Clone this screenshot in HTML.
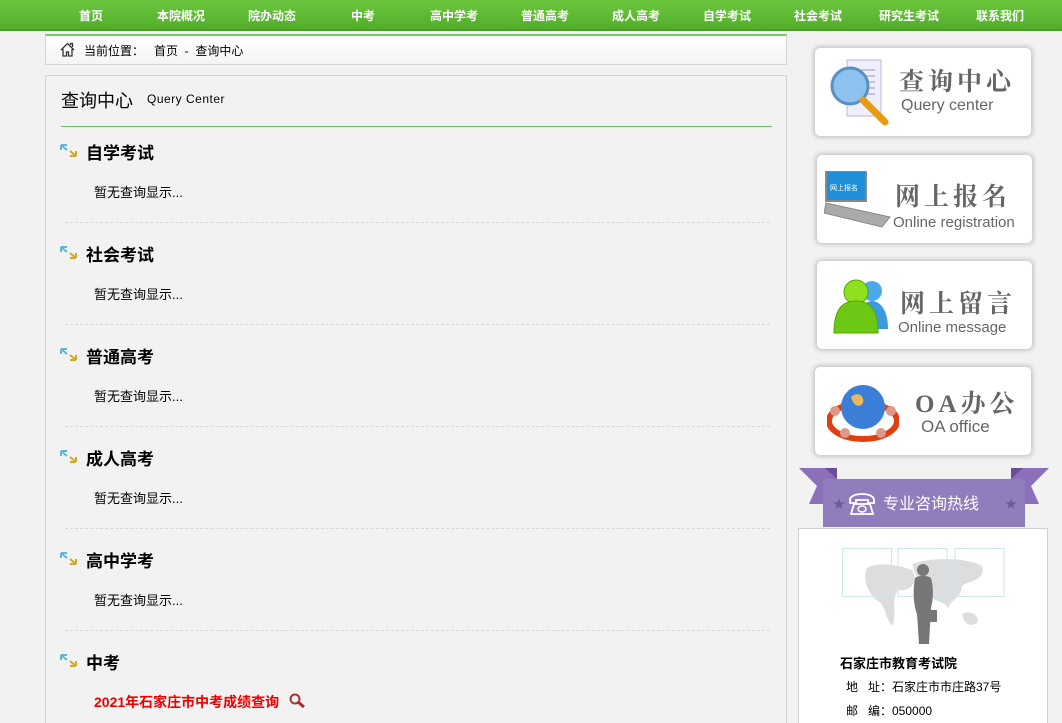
<!DOCTYPE html>
<html><head><meta charset="utf-8"><style>
*{margin:0;padding:0;box-sizing:border-box}
html{overflow:hidden;height:723px}
body{width:1062px;height:723px;overflow:hidden;background:#f2f2f2;font-family:"Liberation Sans","Noto Sans CJK SC",sans-serif;position:relative;color:#000}
.nav{position:absolute;left:0;top:0;width:1062px;height:31px;background:linear-gradient(#6dc63e,#52ae2b);border-bottom:2px solid #4a9e26}
.nav span{position:absolute;top:7px;color:#fff;font-size:12px;font-weight:bold;transform:translateX(-50%)}
.bc{position:absolute;left:45px;top:34px;width:742px;height:31px;border:1px solid #d4d4d4;border-top:2px solid #7cc56a;background:linear-gradient(#fff,#f4f4f4);font-size:12px}
.main{position:absolute;left:45px;top:75px;width:742px;height:648px;border:1px solid #d4d4d4;border-bottom:none;background:#f2f2f2}
.a{position:absolute;white-space:nowrap}
.sec{position:absolute;left:15px;width:711px;height:102px}
.sec h3{position:absolute;left:26px;top:0;font-size:17px;font-weight:bold}
.sec .ic{position:absolute;left:0;top:5px}
.sec p{position:absolute;left:34px;top:43px;font-size:13px}
.sec .d{position:absolute;left:5px;top:83px;width:705px;border-top:1px dashed #d8d8d8}
.card{position:absolute;width:216px;height:88px;background:#fff;border-radius:5px;box-shadow:0 0 4px 2px #c8c8c8}
.card .cn{position:absolute;font-family:"Liberation Serif","Noto Serif CJK SC",serif;font-size:25px;color:#666;letter-spacing:4px;font-weight:bold}
.card .en{position:absolute;font-size:16px;color:#666}
</style></head><body>
<div class="nav">
<span style="left:91px">首页</span><span style="left:181px">本院概况</span><span style="left:272px">院办动态</span><span style="left:363px">中考</span><span style="left:454px">高中学考</span><span style="left:545px">普通高考</span><span style="left:636px">成人高考</span><span style="left:727px">自学考试</span><span style="left:818px">社会考试</span><span style="left:909px">研究生考试</span><span style="left:1000px">联系我们</span>
</div>
<div class="bc">
<svg class="a" style="left:14px;top:6px" width="15" height="15" viewBox="0 0 15 15"><path d="M1 8L7.5 1.5 14 8M3 7v7h3.5v-4h2v4H12V7M10.5 3v-1.5h2v3.5" fill="none" stroke="#333" stroke-width="1.3"/></svg>
<span class="a" style="left:38px;top:6px">当前位置：&nbsp;&nbsp; 首页 &nbsp;- &nbsp;查询中心</span>
</div>
<div class="main">
<span class="a" style="left:15px;top:11px;font-size:18px">查询中心</span>
<span class="a" style="left:101px;top:16px;font-size:12px;letter-spacing:.5px">Query Center</span>
<div class="a" style="left:15px;top:50px;width:711px;border-top:1px solid #6cbf5a"></div>
</div>
<div class="a" style="left:45px;top:75px;width:742px;height:648px">
<div class="sec" style="top:64px"><svg class="ic" width="17" height="13"><path d="M1 1h6M1 1v5M1 1l6 5" stroke="#5ab8d8" stroke-width="2" fill="none"/><path d="M16 12h-6M16 12v-5M16 12l-6-5" stroke="#d6a820" stroke-width="2" fill="none"/></svg><h3>自学考试</h3><p>暂无查询显示...</p><div class="d"></div></div>
<div class="sec" style="top:166px"><svg class="ic" width="17" height="13"><path d="M1 1h6M1 1v5M1 1l6 5" stroke="#5ab8d8" stroke-width="2" fill="none"/><path d="M16 12h-6M16 12v-5M16 12l-6-5" stroke="#d6a820" stroke-width="2" fill="none"/></svg><h3>社会考试</h3><p>暂无查询显示...</p><div class="d"></div></div>
<div class="sec" style="top:268px"><svg class="ic" width="17" height="13"><path d="M1 1h6M1 1v5M1 1l6 5" stroke="#5ab8d8" stroke-width="2" fill="none"/><path d="M16 12h-6M16 12v-5M16 12l-6-5" stroke="#d6a820" stroke-width="2" fill="none"/></svg><h3>普通高考</h3><p>暂无查询显示...</p><div class="d"></div></div>
<div class="sec" style="top:370px"><svg class="ic" width="17" height="13"><path d="M1 1h6M1 1v5M1 1l6 5" stroke="#5ab8d8" stroke-width="2" fill="none"/><path d="M16 12h-6M16 12v-5M16 12l-6-5" stroke="#d6a820" stroke-width="2" fill="none"/></svg><h3>成人高考</h3><p>暂无查询显示...</p><div class="d"></div></div>
<div class="sec" style="top:472px"><svg class="ic" width="17" height="13"><path d="M1 1h6M1 1v5M1 1l6 5" stroke="#5ab8d8" stroke-width="2" fill="none"/><path d="M16 12h-6M16 12v-5M16 12l-6-5" stroke="#d6a820" stroke-width="2" fill="none"/></svg><h3>高中学考</h3><p>暂无查询显示...</p><div class="d"></div></div>
<div class="sec" style="top:574px"><svg class="ic" width="17" height="13"><path d="M1 1h6M1 1v5M1 1l6 5" stroke="#5ab8d8" stroke-width="2" fill="none"/><path d="M16 12h-6M16 12v-5M16 12l-6-5" stroke="#d6a820" stroke-width="2" fill="none"/></svg><h3>中考</h3><p style="color:#e00;font-weight:bold;font-size:14px;top:43px">2021年石家庄市中考成绩查询 <svg width="18" height="15" style="vertical-align:-1px;margin-left:6px"><circle cx="6" cy="6" r="4.5" fill="#eee" stroke="#a33" stroke-width="2"/><path d="M9 9l6 5" stroke="#933" stroke-width="3"/></svg></p></div>
</div>

<div class="card" style="left:815px;top:48px">
<svg class="a" style="left:10px;top:8px" width="75" height="74"><rect x="22" y="4" width="34" height="56" fill="#eef" stroke="#bbc"/><path d="M28 14h22M28 20h22M28 26h22M28 32h22M28 38h22" stroke="#99a"/><circle cx="25" cy="30" r="18" fill="#8ec2ee" stroke="#5a8fc4" stroke-width="3"/><path d="M38 44l22 22" stroke="#e89a10" stroke-width="7" stroke-linecap="round"/></svg>
<span class="cn" style="left:84px;top:14px">查询中心</span><span class="en" style="left:86px;top:49px">Query center</span></div>
<div class="card" style="left:817px;top:155px;width:215px">
<svg class="a" style="left:7px;top:16px" width="70" height="64"><rect x="2" y="0" width="40" height="30" fill="#1e8fd8" stroke="#888" stroke-width="2"/><text x="6" y="19" font-size="7" fill="#fff" font-family="Noto Sans CJK SC">网上报名</text><path d="M2 32l64 14-8 10L0 42z" fill="#aaa" stroke="#888"/></svg>
<span class="cn" style="left:78px;top:22px">网上报名</span><span class="en" style="left:76px;top:59px;font-size:15px">Online registration</span></div>
<div class="card" style="left:817px;top:261px;width:215px">
<svg class="a" style="left:15px;top:16px" width="60" height="62"><circle cx="40" cy="14" r="10" fill="#4aaae8"/><path d="M26 52c0-22 8-28 14-28s16 6 16 28z" fill="#3a9ae0"/><circle cx="24" cy="15" r="12" fill="#8ee020" stroke="#5a0" /><path d="M2 56c0-26 10-32 22-32s22 6 22 32z" fill="#6cc814" stroke="#5a0"/></svg>
<span class="cn" style="left:83px;top:23px">网上留言</span><span class="en" style="left:81px;top:58px;font-size:15px">Online message</span></div>
<div class="card" style="left:815px;top:367px">
<svg class="a" style="left:12px;top:14px" width="72" height="62"><ellipse cx="36" cy="40" rx="34" ry="18" fill="none" stroke="#e04010" stroke-width="6"/><circle cx="36" cy="26" r="22" fill="#3a7ed8"/><path d="M24 16c6-6 14-2 12 6-4 6-10 2-12-6z" fill="#e8b860"/><circle cx="8" cy="30" r="5" fill="#d98"/><circle cx="64" cy="30" r="5" fill="#d98"/><circle cx="18" cy="52" r="5" fill="#d98"/><circle cx="54" cy="52" r="5" fill="#d98"/></svg>
<span class="cn" style="left:100px;top:17px">OA办公</span><span class="en" style="left:106px;top:50px;font-size:17px">OA office</span></div>

<svg class="a" style="left:799px;top:468px" width="250" height="60"><path d="M0 0h38v36H10l8-18z" fill="#8b6fb8"/><path d="M250 0h-38v36h28l-8-18z" fill="#8b6fb8"/><path d="M26 0l12 11V0zM224 0l-12 11V0z" fill="#6a4f98"/><rect x="24" y="11" width="202" height="48" fill="#917dbb"/><text x="34" y="40" font-size="12" fill="#6a5a9a">★</text><text x="206" y="40" font-size="12" fill="#6a5a9a">★</text><path d="M51 32c0-8 24-8 24 0v3h-6v-3h-12v3h-6z M55 36h16l3 10H52z" fill="none" stroke="#fff" stroke-width="1.8"/><ellipse cx="63" cy="41" rx="4" ry="3" fill="none" stroke="#fff" stroke-width="1.5"/><text x="84" y="41" font-size="16" fill="#fff" font-family="Noto Sans CJK SC">专业咨询热线</text></svg>
<div class="a" style="left:798px;top:528px;width:250px;height:200px;background:#fff;border:1px solid #d0d0d0">
<svg class="a" style="left:43px;top:19px" width="164" height="100"><path d="M25 20c10-6 30-4 45 2 8 14-4 22-14 20-8 12 0 24-6 36-8-10-6-22-16-26-8-8-14-20-9-32zM70 16c18-6 50-8 70 2 4 16-14 14-20 20-2 14-10 12-14 22-6-10-16-4-18-16-10-6-14-16-18-28zM120 66c8-4 16 0 16 8-8 6-14 2-16-8z" fill="#ddd"/><rect x="0.5" y="0.5" width="49" height="48" fill="none" stroke="#cde6ee"/><rect x="56" y="0.5" width="49" height="48" fill="none" stroke="#cde6ee"/><rect x="113" y="0.5" width="49" height="48" fill="none" stroke="#cde6ee"/><circle cx="81" cy="22" r="6" fill="#777"/><path d="M73 30c4-3 12-3 16 0 3 10 2 22 0 30l-2 36h-10l-2-30c-4-10-4-26-2-36z" fill="#777"/><rect x="85" y="62" width="10" height="12" fill="#777"/></svg>
<span class="a" style="left:41px;top:124px;font-size:13px;font-weight:bold">石家庄市教育考试院</span>
<span class="a" style="left:47px;top:149px;font-size:12px">地&nbsp;&nbsp;&nbsp;址：石家庄市市庄路37号</span>
<span class="a" style="left:47px;top:173px;font-size:12px">邮&nbsp;&nbsp;&nbsp;编：050000</span>
</div>
</body></html>
